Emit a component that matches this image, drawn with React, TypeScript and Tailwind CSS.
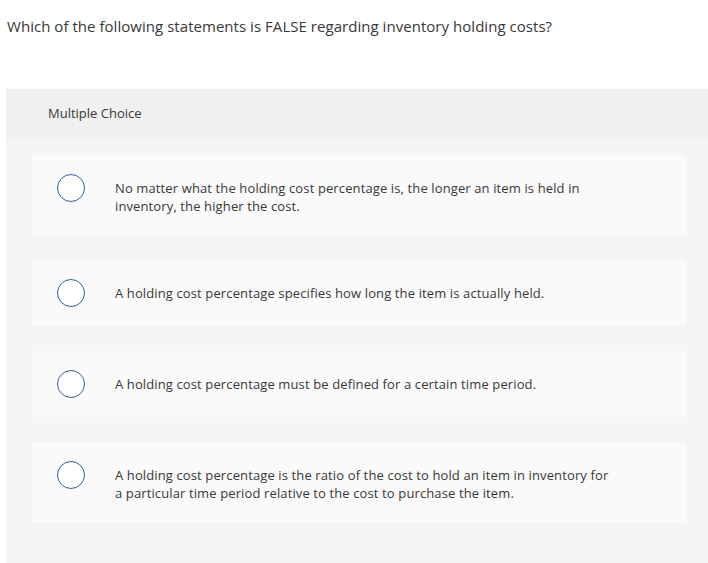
import React from "react";

const options = [
  "No matter what the holding cost percentage is, the longer an item is held in inventory, the higher the cost.",
  "A holding cost percentage specifies how long the item is actually held.",
  "A holding cost percentage must be defined for a certain time period.",
  "A holding cost percentage is the ratio of the cost to hold an item in inventory for a particular time period relative to the cost to purchase the item.",
];

export default function App() {
  return (
    <div
      className="w-[708px] h-[563px] bg-white overflow-hidden text-[#383838]"
      style={{ fontFamily: "'Open Sans', sans-serif" }}
    >
      <div className="pl-[7px] pt-[16px] h-[89px] text-[15px] leading-[20px] tracking-[0.04px]">
        Which of the following statements is FALSE regarding inventory holding costs?
      </div>
      <div className="ml-[6px] bg-[#f5f5f5] h-[474px]">
        <div className="h-[50px] bg-[#f0f0f0] flex items-center pl-[42px] text-[13px]">
          Multiple Choice
        </div>
        <div className="pl-[26px] pr-[22px] pt-[16px] flex flex-col gap-[25px]">
          {options.map((t, i) => (
            <div
              key={i}
              className="bg-[#fafafa] rounded-[3px] flex items-start pl-[25px] pr-[76px] py-[19px]"
            >
              <div className="w-[28px] h-[28px] shrink-0 rounded-full border-[1.5px] border-[#2f5f98] bg-white" />
              <div className="ml-[30px] mt-[5px] mb-[1px] text-[13px] leading-[18px] tracking-[0.12px]">
                {t}
              </div>
            </div>
          ))}
        </div>
      </div>
    </div>
  );
}
